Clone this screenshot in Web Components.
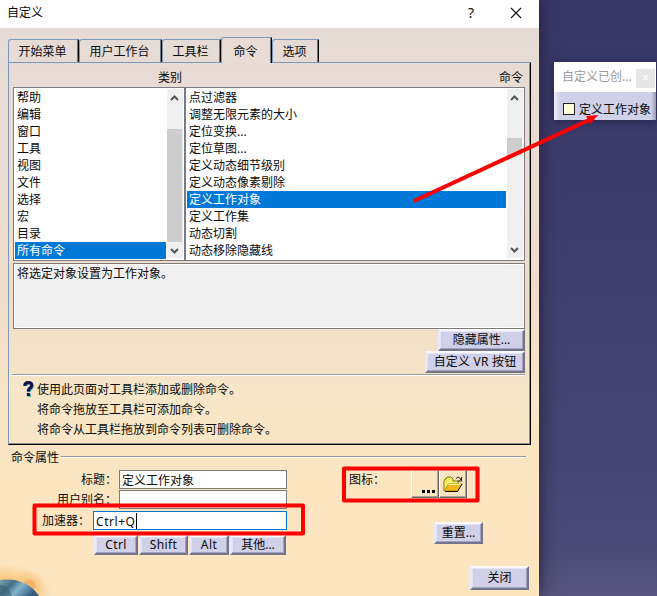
<!DOCTYPE html>
<html lang="zh-CN">
<head>
<meta charset="utf-8">
<title>自定义</title>
<style>
html,body{margin:0;height:100%;overflow:hidden}
body{font:12px/17px "Noto Sans","Noto Sans CJK SC",sans-serif;color:#0a0a0a}
</style>
</head>
<body>
<ui-desktop></ui-desktop>
<script>
const define = (name, html, init) => customElements.define(name, class extends HTMLElement {
  constructor() {
    super();
    this.attachShadow({mode: 'open'}).innerHTML = html;
  }
  connectedCallback() { if (init) init(this, this.shadowRoot); }
});

define('push-button', `<style>
:host{display:flex;align-items:center;justify-content:center;box-sizing:border-box;flex:none;white-space:nowrap;
background:#d0d0e8;border:2px solid;border-color:#fbfbff #73738c #73738c #e8e8fc;box-shadow:inset -1px -1px #a4a4c0,inset 1px 1px #e4e4f8;height:22px;line-height:18px}
</style><slot></slot>`);

define('tab-item', `<style>
:host{display:block;box-sizing:border-box;flex:none;height:23px;text-align:center;line-height:23px;padding-right:2px;
border-top:1px solid #7c9ab8;border-left:1px solid #7c9ab8;border-right:1px solid #000;border-top-left-radius:3px;box-shadow:inset -1px 0 #777}
:host([active]){height:26px;line-height:27px;margin-bottom:-1px;background:#e8dcd4;position:relative}
</style><slot></slot>`);

define('scroll-bar', `<style>
:host{display:flex;flex-direction:column;width:16px;flex:none;background:#f0f0f0}
svg{display:block;flex:none;width:16px;height:17px}
path{fill:none;stroke:#555;stroke-width:2}
.track{flex:1}
.thumb{width:15px;background:#cdcdcd;height:var(--thumb);margin-top:var(--offset)}
</style><svg viewBox="0 0 16 17"><path d="M4 11l3.500-3.500 3.500 3.500"/></svg><div class="track"><div class="thumb"></div></div><svg viewBox="0 0 16 17"><path d="M4 7l3.500 3.500 3.500-3.500"/></svg>`);

define('list-box', `<style>
:host{display:flex;box-sizing:border-box;height:174px;border:1px solid #7b7b85;background:#fff;padding:1px 1px 2px 1px;gap:1px}
.items{flex:1;min-width:0}
.item{height:17px;line-height:18px;padding-left:2px;white-space:nowrap}
.item.on{background:#0078d7;color:#fff}
</style><div class="items"></div><scroll-bar></scroll-bar>`, (el, root) => {
  const box = root.querySelector('.items');
  box.replaceChildren(...el.getAttribute('items').split('|').map((text, i) => {
    const d = document.createElement('div');
    d.className = i === +el.getAttribute('selected') ? 'item on' : 'item';
    d.textContent = text;
    return d;
  }));
});

define('text-field', `<style>
:host{display:block;box-sizing:border-box;height:19px;border:1px solid #7a7a7a;background:#fff;padding-left:2px;line-height:19px;white-space:nowrap}
:host([focused]){border-color:#0078d7;letter-spacing:.55px}
.caret{display:none;width:1px;height:16px;background:#000;vertical-align:top;margin-top:1px}
:host([focused]) .caret{display:inline-block}
</style><slot></slot><span class="caret"></span>`);

define('icon-button', `<style>
:host{display:flex;align-items:center;justify-content:center;box-sizing:border-box;width:28px;height:28px;flex:none;
border:1px solid;border-color:#fff #6b6a6a #6b6a6a #fff;box-shadow:inset -1px -1px #aaa39a}
</style><slot></slot>`);

define('help-note', `<style>
:host{display:flex;gap:3px;padding:4px 0 0 10px;line-height:20px}
svg{flex:none;display:block;width:11px;height:17px}
</style><svg viewBox="0 0 11 17"><g fill="none" stroke-width="3"><path stroke="#1a9a9a" d="M2.800 5.700Q3 3 6 3T9.400 5.700Q9.400 7.500 7.600 8.700T6.400 12"/><path stroke="#15104f" d="M1.600 5.800Q1.800 2.500 5.200 2.500T8.600 5Q8.600 7 6.800 8.200T5.400 11.500"/></g><path fill="#1a9a9a" d="M4.800 13.700h3v3h-3z"/><path fill="#15104f" d="M3.800 13h3v3h-3z"/></svg><div><slot></slot></div>`);

define('tab-panel', `<style>
:host{display:flex;flex-direction:column;box-sizing:border-box;height:383px;padding:0 5px 0 4px;
border:1px solid;border-color:#7c9ab8 #000 #000 #7c9ab8;box-shadow:inset -1px -1px #8f8f8f}
.heads{display:flex;justify-content:space-between;height:24px;line-height:29px;padding:0 2px 0 145px;flex:none}
.lists{display:grid;grid-template-columns:172px 340px;width:512px}
.desc{box-sizing:border-box;height:66px;margin-top:2px;border:1px solid #7b7b7b;box-shadow:inset 0 0 0 1px #fff;background:#f0f0f0;padding:1px 3px;line-height:18px}
.buttons{display:flex;flex-direction:column;align-items:flex-end}
.rule{height:1px;background:#999;border-bottom:1px solid #fff;margin:1px 0 0 -1px;flex:none}
.vis{width:87px}.vr{width:100px;letter-spacing:.2px}
.a{--thumb:113px;--offset:23px}.b{--thumb:17px;--offset:32px}
</style>
<div class="heads"><span>类别</span><span>命令</span></div>
<div class="lists">
<list-box class="a" selected="9" items="帮助|编辑|窗口|工具|视图|文件|选择|宏|目录|所有命令"></list-box>
<list-box class="b" selected="6" items="点过滤器|调整无限元素的大小|定位变换...|定位草图...|定义动态细节级别|定义动态像素剔除|定义工作对象|定义工作集|动态切割|动态移除隐藏线"></list-box>
</div>
<div class="desc">将选定对象设置为工作对象。</div>
<div class="buttons"><push-button class="vis">隐藏属性...</push-button><push-button class="vr">自定义 VR 按钮</push-button></div>
<div class="rule"></div>
<help-note><div>使用此页面对工具栏添加或删除命令。</div><div>将命令拖放至工具栏可添加命令。</div><div>将命令从工具栏拖放到命令列表可删除命令。</div></help-note>`);

define('command-properties', `<style>
:host{display:block;margin-top:3px}
.legend{display:flex;align-items:center;gap:2px;padding:0 5px 0 3px;height:20px;line-height:20px}
.legend i{flex:1;height:1px;background:#999;border-bottom:1px solid #fff;margin-top:-2px}
.cols{display:flex;padding-top:2px}
.form{width:279px}
.row{display:flex;justify-content:flex-end;gap:2px;height:19px;margin-bottom:1px}
.row.acc{margin-top:2px;gap:3px}
.row text-field{width:168px}
.row.acc text-field{width:194px}
label{line-height:20px;white-space:nowrap}
.mods{display:flex;gap:1px;padding:4px 0 0 86px}
.mods push-button{height:20px;line-height:16px;letter-spacing:.4px}
.icons{display:flex;padding-left:62px;height:28px}
.icons label{width:62px;flex:none}
.dots{display:flex;gap:2px;align-self:flex-end;margin:0 -7px 4px 0}
.dots i{width:3px;height:3px;background:#000}
.reset{width:49px;margin:24px 0 0 147px}
.right{width:244px}
</style>
<div class="legend"><span>命令属性</span><i></i></div>
<div class="cols">
<div class="form">
<div class="row title"><label>标题：</label><text-field>定义工作对象</text-field></div>
<div class="row alias"><label>用户别名：</label><text-field></text-field></div>
<div class="row acc"><label>加速器：</label><text-field focused>Ctrl+Q</text-field></div>
<div class="mods"><push-button style="width:44px">Ctrl</push-button><push-button style="width:49px">Shift</push-button><push-button style="width:40px">Alt</push-button><push-button style="width:56px;letter-spacing:0">其他...</push-button></div>
</div>
<div class="right">
<div class="icons"><label>图标：</label><icon-button><span class="dots"><i></i><i></i><i></i></span></icon-button>
<icon-button><svg width="20" height="17" viewBox="0 0 20 17"><path d="M1 15V5l1-2h1l1-2h4l2 2v2h5v3" fill="#f4ed69" stroke="#77770a"/><path d="M1.500 15l4-7H19l-4.500 7z" fill="#efbb18" stroke="#b8880a"/><path d="M5.500 8.500H18" stroke="#fff6b0"/><path d="M2 15.500h12.500L19 8" fill="none" stroke="#111"/><path d="M13 2.500q3-3 5 1.500M18.500 1v4H15" fill="none" stroke="#111"/></svg></icon-button></div>
<push-button class="reset">重置...</push-button>
</div>
</div>`);

define('custom-dialog', `<style>
:host{display:flex;flex-direction:column;box-sizing:border-box;height:596px;position:relative;
background:radial-gradient(circle at 29px 586px,#f6b266 0 5px,#f8c47b88 8px,transparent 17px),radial-gradient(ellipse 48px 32px at 4px 596px,#f9ca80 55%,transparent 100%),linear-gradient(#e5dbd6 28px,#ecdccf 200px,#efdccb 290px,#f7e6c7 400px,#fce5c0 500px,#fde5c0)}
.bar{display:flex;align-items:center;height:28px;flex:none;background:#fff;padding:0 17px 3px 7px;box-sizing:border-box}
.bar span{flex:1}.bar b{font:14px "Noto Sans";margin-right:36px}
.body{padding:9px 8px 0}
.tabs{display:flex;align-items:flex-end;height:25px}
.close{width:59px;height:24px;margin:auto 10px 6px auto}
.globe{position:absolute;left:0;bottom:0;display:block}
</style>
<div class="bar"><span>自定义</span><b>?</b><svg width="12" height="12"><path d="M1 1l10 10M11 1L1 11" stroke="#111" stroke-width="1.1"/></svg></div>
<div class="body">
<div class="tabs"><tab-item style="width:71px">开始菜单</tab-item><tab-item style="width:83px">用户工作台</tab-item><tab-item style="width:59px">工具栏</tab-item><tab-item active style="width:51px">命令</tab-item><tab-item style="width:47px">选项</tab-item></div>
<tab-panel></tab-panel>
<command-properties></command-properties>
</div>
<push-button class="close">关闭</push-button>
<svg class="globe" width="42" height="18"><defs><linearGradient id="g" x2="1" y2=".4"><stop stop-color="#7fa2ac"/><stop offset=".35" stop-color="#456e88"/><stop offset=".6" stop-color="#83b4ca"/><stop offset="1" stop-color="#365f83"/></linearGradient></defs><path d="M0 2C18 0 31 6 39 18H0z" fill="url(#g)"/><path d="M0 7Q8 6 12 18H0z" fill="#3f6377" opacity=".6"/></svg>`);

define('tool-window', `<style>
:host{display:flex;flex-direction:column;width:102px;height:58px;background:#d0d0e8;box-shadow:0 1px 8px #1d1838aa}
.bar{display:flex;height:30px;background:#fff;color:#999;line-height:29px;padding-left:8px;white-space:nowrap}
.bar span{width:74px}
.x{width:19px;height:19px;margin-top:7px;background:#e6e6e6;color:#fff;line-height:17px;text-align:center}
.item{display:flex;align-items:center;flex:1;gap:4px;padding:7px 0 0 9px;white-space:nowrap;background:linear-gradient(90deg,#f0f0f8,transparent 6px 97px,#9999b0)}
.item i{width:10px;height:10px;border:1px solid #222;background:#ffffda;flex:none;margin-top:-2px}
</style><div class="bar"><span>自定义已创...</span><div class="x">×</div></div><div class="item"><i></i>定义工作对象</div>`);

define('ui-desktop', `<style>
:host{display:block;position:relative;width:657px;height:596px;overflow:hidden;background:linear-gradient(#373767,#3d3d6c 200px,#434471 440px,#4a4a76 540px,#57557f)}
custom-dialog{position:absolute;left:0;top:0;width:539px;box-shadow:0 0 16px #221b35}
tool-window{position:absolute;left:554px;top:62px}
.marks{position:absolute;left:0;top:0}
</style>
<custom-dialog></custom-dialog><tool-window></tool-window>
<svg class="marks" width="657" height="596"><g fill="none" stroke="#f00" stroke-width="4" stroke-linejoin="round"><rect x="34.500" y="505.500" width="268.500" height="28"/><rect x="344" y="468.500" width="133.500" height="32"/><path d="M415 200.500L590 119.500" stroke-linecap="round"/></g><path d="M598 115L586 116l4.500 8z" fill="#f00"/></svg>`);
</script>
</body>
</html>
